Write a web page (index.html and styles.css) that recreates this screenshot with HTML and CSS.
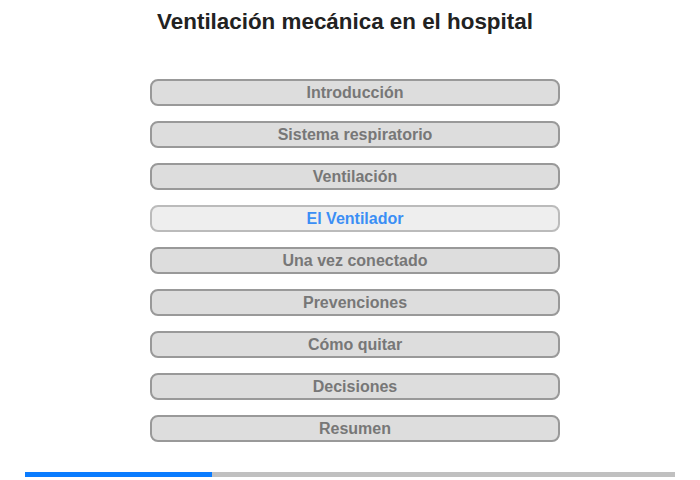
FILE: index.html
```html
<!DOCTYPE html>
<html lang="es">
<head>
<meta charset="utf-8">
<title>Ventilación mecánica en el hospital</title>
<link rel="stylesheet" href="styles.css">
</head>
<body>
<div class="page">
  <h1 class="title">Ventilación mecánica en el hospital</h1>
  <nav class="menu">
    <a class="item">Introducción</a>
    <a class="item">Sistema respiratorio</a>
    <a class="item">Ventilación</a>
    <a class="item active">El Ventilador</a>
    <a class="item">Una vez conectado</a>
    <a class="item">Prevenciones</a>
    <a class="item">Cómo quitar</a>
    <a class="item">Decisiones</a>
    <a class="item">Resumen</a>
  </nav>
  <div class="progress"><div class="progress-fill" style="width:28.8%"></div></div>
</div>
</body>
</html>
```
FILE: styles.css
```css
html, body {
  margin: 0;
  padding: 0;
  background: #fff;
}
.page {
  width: 700px;
  height: 480px;
  font-family: "Liberation Sans", Arial, sans-serif;
  display: flex;
  flex-direction: column;
  align-items: center;
}
.title {
  margin: 8px 10px 0 0;
  font-size: 22.4px;
  font-weight: bold;
  color: #222;
  line-height: 28px;
}
.menu {
  margin: 43px 0 0 10px;
  width: 410px;
  display: flex;
  flex-direction: column;
  gap: 15px;
}
.item {
  display: block;
  box-sizing: border-box;
  height: 27px;
  border: 2px solid #999;
  border-radius: 8px;
  background: #ddd;
  color: #777;
  font-size: 16px;
  font-weight: bold;
  line-height: 23px;
  text-align: center;
}
.item.active {
  background: #eee;
  border-color: #bbb;
  color: #3b8ef5;
}
.progress {
  margin-top: 30px;
  width: 650px;
  height: 5px;
  background: #c0c0c0;
}
.progress-fill {
  height: 100%;
  background: #0a7cff;
}
```
